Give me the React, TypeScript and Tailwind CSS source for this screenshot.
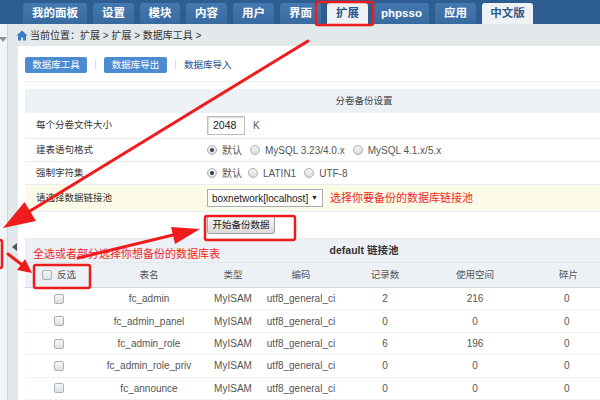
const tabs = [
  { label: "我的面板", w: "w-[64px]", active: false },
  { label: "设置", w: "w-[41px]", active: false },
  { label: "模块", w: "w-[40px]", active: false },
  { label: "内容", w: "w-[41px]", active: false },
  { label: "用户", w: "w-[41px]", active: false },
  { label: "界面", w: "w-[41px]", active: false },
  { label: "扩展", w: "w-[41px]", active: true },
  { label: "phpsso", w: "w-[55px]", active: false },
  { label: "应用", w: "w-[41px]", active: false },
  { label: "中文版", w: "w-[51px]", active: true },
];

const tables = [
  { name: "fc_admin", rows: "2", size: "216" },
  { name: "fc_admin_panel", rows: "0", size: "0" },
  { name: "fc_admin_role", rows: "6", size: "196" },
  { name: "fc_admin_role_priv", rows: "0", size: "0" },
  { name: "fc_announce", rows: "0", size: "0" },
];

function Radio({ checked }: { checked?: boolean }) {
  return (
    <span className="w-[10px] h-[10px] rounded-full border border-[#a9b0b6] bg-gradient-to-b from-[#f4f4f4] to-[#d9dcdf] flex items-center justify-center mr-[5px]">
      {checked && <span className="w-[4px] h-[4px] rounded-full bg-[#3a3a3a]" />}
    </span>
  );
}

function Checkbox() {
  return <span className="w-[10px] h-[10px] rounded-[2px] border border-[#a9b0b6] bg-gradient-to-b from-[#f6f6f6] to-[#dcdfe2]" />;
}

function SettingRow({ label, bg, h, children }: { label: string; bg?: string; h: string; children?: React.ReactNode }) {
  return (
    <div className={`flex items-center border-b border-[#e8ecef] ${h} ${bg ?? ""}`}>
      <div className="w-[182px] pl-[11px] text-[9.5px] text-[#333]">{label}</div>
      <div className="flex items-center text-[10px] text-[#555]">{children}</div>
    </div>
  );
}

export default function App() {
  return (
    <div className="relative w-[600px] h-[400px] overflow-hidden bg-[#e3e8eb] font-['Liberation_Sans','Noto_Sans_CJK_SC',sans-serif]">
      {/* top menu */}
      <div className="h-[24px] bg-[#2d5d91] flex items-end gap-[6px] pl-[23px]">
        {tabs.map((t) => (
          <div
            key={t.label}
            className={`${t.w} h-[21px] rounded-t-[3px] flex items-center justify-center text-[11.5px] font-bold ${
              t.active ? "bg-[#eef2f5] text-[#2c5a8c]" : "bg-gradient-to-b from-[#4479b1] to-[#376a9f] text-white"
            }`}
          >
            {t.label}
          </div>
        ))}
      </div>

      <div className="flex h-[376px]">
        {/* left sidebar */}
        <div className="w-[12px] bg-[#f1f4f6] border-r border-[#cfd5da] pt-[13px]">
          <span className="block w-0 h-0 border-l-[4px] border-r-[4px] border-t-[5px] border-l-transparent border-r-transparent border-t-[#8a939b] ml-[-1px]" />
        </div>

        <div className="flex-1 flex flex-col">
          {/* breadcrumb */}
          <div className="h-[23px] flex items-center pl-[8px] justify-between">
            <div className="flex items-center gap-[2px] text-[10px] text-[#333]">
              <svg width="12" height="11" viewBox="0 0 12 11">
                <path d="M6 0.5 L0.5 5.5 H2 V10.5 H5 V7.5 H7 V10.5 H10 V5.5 H11.5 Z" fill="#3b7cc6" />
              </svg>
              <span>当前位置：扩展 &gt; 扩展 &gt; 数据库工具 &gt;</span>
            </div>
            <div className="h-[15px] w-[28px] bg-white border border-[#c9d2da] border-r-0 rounded-l-[2px] text-[9.5px] text-[#2c6bb3] pl-[3px] flex items-center whitespace-nowrap">
              生成首
            </div>
          </div>

          <div className="flex flex-1">
            {/* collapse strip */}
            <div className="w-[10px] pt-[197px] pl-[4px]">
              <span className="block w-0 h-0 border-t-[4px] border-b-[4px] border-r-[5px] border-t-transparent border-b-transparent border-r-[#555]" />
            </div>

            {/* white panel */}
            <div className="flex-1 bg-white pl-[7px] pt-[11px] overflow-hidden">
              <div className="flex items-center h-[16px] text-[9.5px]">
                <div className="w-[62px] h-[16px] bg-[#4a8bd2] rounded-[2px] text-white flex items-center justify-center">数据库工具</div>
                <span className="mx-[8px] w-px h-[10px] bg-[#d8dde2]" />
                <div className="w-[63px] h-[16px] bg-[#4a8bd2] rounded-[2px] text-white flex items-center justify-center">数据库导出</div>
                <span className="mx-[8px] w-px h-[10px] bg-[#d8dde2]" />
                <span className="text-[#1f4f8c]">数据库导入</span>
              </div>
              <div className="mt-[8px] h-px w-[678px] bg-[#eceff2]" />

              {/* backup settings */}
              <div className="mt-[7px] w-[678px]">
                <div className="h-[24px] bg-[#edf1f5] flex items-center justify-center text-[9.5px] text-[#444]">分卷备份设置</div>
                <SettingRow label="每个分卷文件大小" h="h-[26px]">
                  <span className="w-[38px] h-[19px] border border-[#b7bec5] shadow-[inset_1px_1px_1px_#ddd] flex items-center pl-[5px] text-[10.5px] text-[#222]">2048</span>
                  <span className="ml-[8px] text-[#555]">K</span>
                </SettingRow>
                <SettingRow label="建表语句格式" h="h-[23px]">
                  <Radio checked />
                  <span className="mr-[8px]">默认</span>
                  <Radio />
                  <span className="mr-[8px]">MySQL 3.23/4.0.x</span>
                  <Radio />
                  <span>MySQL 4.1.x/5.x</span>
                </SettingRow>
                <SettingRow label="强制字符集" h="h-[23px]">
                  <Radio checked />
                  <span className="mr-[6px]">默认</span>
                  <Radio />
                  <span className="mr-[8px]">LATIN1</span>
                  <Radio />
                  <span>UTF-8</span>
                </SettingRow>
                <SettingRow label="请选择数据链接池" h="h-[27px]" bg="bg-[#fbfbe8]">
                  <span className="w-[116px] h-[18px] bg-white border border-[#a6adb4] flex items-center justify-between px-[4px] text-[10px] text-[#222]">
                    <span>boxnetwork[localhost]</span>
                    <span className="text-[7px]">▼</span>
                  </span>
                  <span className="ml-[7px] text-[11px] text-[#f0281e]">选择你要备份的数据库链接池</span>
                </SettingRow>
                <SettingRow label="" h="h-[27px]">
                  <span className="w-[68px] h-[18px] border border-[#9aa1a7] rounded-[2px] bg-gradient-to-b from-[#f7f7f7] to-[#dadada] flex items-center justify-center text-[9.5px] text-[#222]">开始备份数据</span>
                </SettingRow>
              </div>

              {/* table list */}
              <div className="w-[678px]">
                <div className="h-[24px] bg-[#edf1f5] border-b border-[#dfe6ed] flex items-center justify-center text-[10.5px] font-bold text-[#333]">default 链接池</div>
                <div className="grid grid-cols-[68px_112px_56px_80px_88px_92px_182px] h-[25px] bg-[#edf1f5] border-b border-[#cad8e6] items-center text-[9.5px] text-[#555] text-center">
                  <div className="flex items-center justify-center gap-[5px]">
                    <Checkbox />
                    <span>反选</span>
                  </div>
                  <div>表名</div>
                  <div>类型</div>
                  <div>编码</div>
                  <div>记录数</div>
                  <div>使用空间</div>
                  <div className="text-left pl-[38px]">碎片</div>
                </div>
                {tables.map((r) => (
                  <div
                    key={r.name}
                    className="grid grid-cols-[68px_112px_56px_80px_88px_92px_182px] h-[22.4px] border-b border-[#eef1f4] items-center text-[10px] text-[#555] text-center"
                  >
                    <div className="flex justify-center">
                      <Checkbox />
                    </div>
                    <div>{r.name}</div>
                    <div>MyISAM</div>
                    <div>utf8_general_ci</div>
                    <div>{r.rows}</div>
                    <div>{r.size}</div>
                    <div className="text-left pl-[43px]">0</div>
                  </div>
                ))}
              </div>
            </div>
          </div>
        </div>
      </div>

      {/* red annotations */}
      <div className="absolute left-[33px] top-[246px] text-[11px] text-[#f0281e]">全选或者部分选择你想备份的数据库表</div>
      <svg className="absolute inset-0 pointer-events-none" width="600" height="400" viewBox="0 0 600 400">
        <g fill="none" stroke="#ee1c1c" strokeWidth="2.5">
          <rect x="316" y="2" width="57" height="23" rx="2" />
          <rect x="205" y="216" width="90" height="24" rx="2" />
          <rect x="34" y="265" width="56" height="23" rx="2" />
          <rect x="-20" y="240" width="22" height="28" rx="2" />
        </g>
        <g stroke="#ee1c1c" strokeWidth="3" strokeLinecap="round">
          <line x1="308" y1="41" x2="30" y2="211" />
          <line x1="78" y1="258" x2="173" y2="235" />
          <line x1="8" y1="254" x2="21" y2="264" />
        </g>
        <g fill="#ee1c1c">
          <polygon points="3,228 36,221 24.5,202" />
          <polygon points="200,229 175,244 171,227" />
          <polygon points="32,273 17,270 25,259" />
        </g>
      </svg>
    </div>
  );
}
